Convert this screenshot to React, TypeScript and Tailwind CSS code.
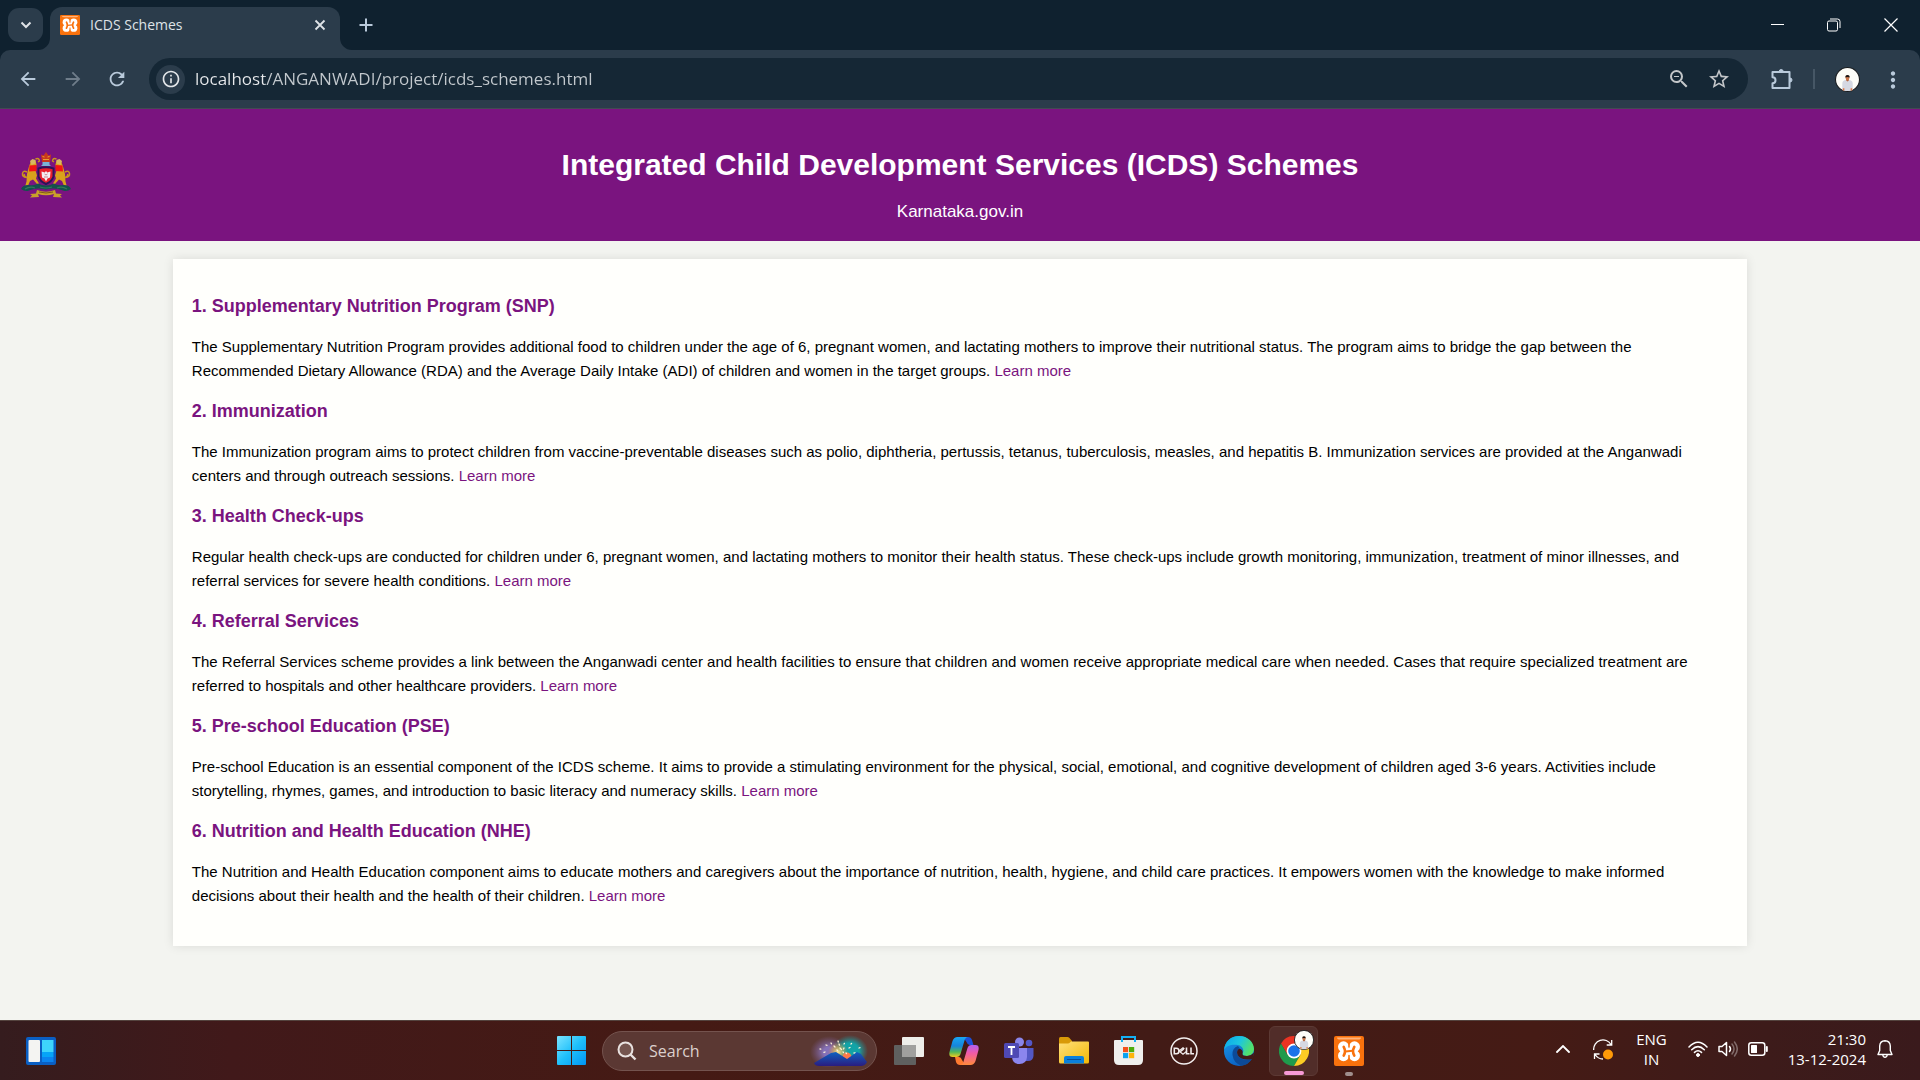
import type { ReactNode } from "react";
import {
  MdArrowBack,
  MdArrowForward,
  MdRefresh,
  MdInfoOutline,
  MdOutlineZoomOut,
  MdStarBorder,
  MdMoreVert,
} from "react-icons/md";

const schemes = [
  {
    title: "1. Supplementary Nutrition Program (SNP)",
    text: "The Supplementary Nutrition Program provides additional food to children under the age of 6, pregnant women, and lactating mothers to improve their nutritional status. The program aims to bridge the gap between the Recommended Dietary Allowance (RDA) and the Average Daily Intake (ADI) of children and women in the target groups.",
  },
  {
    title: "2. Immunization",
    text: "The Immunization program aims to protect children from vaccine-preventable diseases such as polio, diphtheria, pertussis, tetanus, tuberculosis, measles, and hepatitis B. Immunization services are provided at the Anganwadi centers and through outreach sessions.",
  },
  {
    title: "3. Health Check-ups",
    text: "Regular health check-ups are conducted for children under 6, pregnant women, and lactating mothers to monitor their health status. These check-ups include growth monitoring, immunization, treatment of minor illnesses, and referral services for severe health conditions.",
  },
  {
    title: "4. Referral Services",
    text: "The Referral Services scheme provides a link between the Anganwadi center and health facilities to ensure that children and women receive appropriate medical care when needed. Cases that require specialized treatment are referred to hospitals and other healthcare providers.",
  },
  {
    title: "5. Pre-school Education (PSE)",
    text: "Pre-school Education is an essential component of the ICDS scheme. It aims to provide a stimulating environment for the physical, social, emotional, and cognitive development of children aged 3-6 years. Activities include storytelling, rhymes, games, and introduction to basic literacy and numeracy skills.",
  },
  {
    title: "6. Nutrition and Health Education (NHE)",
    text: "The Nutrition and Health Education component aims to educate mothers and caregivers about the importance of nutrition, health, hygiene, and child care practices. It empowers women with the knowledge to make informed decisions about their health and the health of their children.",
  },
];

function XamppLogo({ className }: { className: string }) {
  return (
    <svg viewBox="0 0 30 30" className={className} aria-hidden="true">
      <rect width="30" height="30" rx="2" fill="#f9720d" />
      <path d="M3 1.500h24q0 2-3 2H6q-3 0-3-2z" fill="#ffb37c" />
      <g fill="#fff">
        <circle cx="9.500" cy="10.800" r="5.500" />
        <circle cx="20.500" cy="10.800" r="5.500" />
        <circle cx="9.500" cy="19.700" r="5.500" />
        <circle cx="20.500" cy="19.700" r="5.500" />
        <path d="M6.500 11.500h17v7.500h-17z" />
      </g>
      <g fill="none" stroke="#f9720d" strokeLinecap="round" strokeLinejoin="round">
        <path d="M9.700 10.800q1.300 2.500 1.300 4.400t-1.300 4.500M20.300 10.800Q19 13.300 19 15.200t1.300 4.500" strokeWidth="2.600" />
        <path d="M11.500 15.500l7-.8" strokeWidth="2" />
        <path d="M15 4.500v6.500M15 26v-6.500" strokeWidth="1.500" />
        <path d="M3.500 15.200h1.500M25 15.200h1.500" strokeWidth="1.500" />
      </g>
    </svg>
  );
}

function Avatar({ className }: { className: string }) {
  return (
    <svg viewBox="0 0 24 24" className={className} aria-hidden="true">
      <circle cx="12" cy="12" r="11.500" fill="#fdfdf8" stroke="#15181b" />
      <path d="M7 22v-6q0-3 3-3.500l2 .8 2-.8q3 .5 3 3.500v6q-5 2.200-10 0z" fill="#d5d8e2" />
      <path d="M10.700 10h2.600v3l-1.300.8-1.300-.8z" fill="#b5653f" />
      <ellipse cx="12" cy="10.200" rx="1.900" ry="2.300" fill="#c9754b" />
      <path d="M10 10q-.4-2.400 2-2.400t2 2.400q-2-1-4 0z" fill="#1b1512" />
      <path d="M7.500 20.500h1.500v2H7.500zM15 20.500h1.500v2H15z" fill="#e07a48" />
    </svg>
  );
}

function TitleBar() {
  return (
    <div className="flex h-[50px] bg-[#0f212f] text-[#dfe3e7]">
      <div className="flex w-[50px] items-center pl-2">
        <button aria-label="Search tabs" className="grid h-[34px] w-[35px] place-items-center rounded-[11px] bg-[#2b3c4b]">
          <svg viewBox="0 0 12 12" className="size-3" fill="none" stroke="currentColor" strokeWidth="2" aria-hidden="true">
            <path d="M1.500 3.500L6 8l4.500-4.500" />
          </svg>
        </button>
      </div>
      <div className="relative mt-[7px] flex h-[43px] w-[290px] items-center rounded-t-[12px] bg-[#2b3c4b] pr-3 pb-[7px] pl-[10px]">
        <svg viewBox="0 0 12 12" className="absolute bottom-0 -left-3 size-3 fill-[#2b3c4b]" aria-hidden="true">
          <path d="M12 0v12H0A12 12 0 0 0 12 0z" />
        </svg>
        <svg viewBox="0 0 12 12" className="absolute -right-3 bottom-0 size-3 fill-[#2b3c4b]" aria-hidden="true">
          <path d="M0 0v12h12A12 12 0 0 1 0 0z" />
        </svg>
        <XamppLogo className="size-5" />
        <span className="ml-[10px] flex-1 text-[14px] leading-5">ICDS Schemes</span>
        <button aria-label="Close tab" className="grid size-4 place-items-center">
          <svg viewBox="0 0 12 12" className="size-3" stroke="currentColor" strokeWidth="1.800" aria-hidden="true">
            <path d="M1.500 1.500l9 9M10.500 1.500l-9 9" />
          </svg>
        </button>
      </div>
      <button aria-label="New tab" className="ml-[18px] grid w-4 place-items-center text-[#b9cadb]">
        <svg viewBox="0 0 14 14" className="size-[14px]" stroke="currentColor" strokeWidth="2" aria-hidden="true">
          <path d="M7 .5v13M.5 7h13" />
        </svg>
      </button>
      <div className="ml-auto flex text-white">
        <button aria-label="Minimize" className="grid w-14 place-items-center">
          <svg viewBox="0 0 14 14" className="size-[14px]" stroke="currentColor" aria-hidden="true">
            <path d="M0 6.500h13" />
          </svg>
        </button>
        <button aria-label="Restore" className="grid w-14 place-items-center">
          <svg viewBox="0 0 14 14" className="size-[14px]" fill="none" stroke="currentColor" aria-hidden="true">
            <rect x=".5" y="3" width="10" height="10" rx="1.500" />
            <path d="M3 1h7.500Q13 1 13 3.500V10" />
          </svg>
        </button>
        <button aria-label="Close" className="grid w-[58px] place-items-center">
          <svg viewBox="0 0 14 14" className="size-[14px]" stroke="currentColor" strokeWidth="1.200" aria-hidden="true">
            <path d="M.5.5l13 13M13.500.5l-13 13" />
          </svg>
        </button>
      </div>
    </div>
  );
}

function Toolbar() {
  return (
    <div className="bg-[#0f212f]">
      <div className="flex h-[59px] items-center rounded-t-[10px] border-b border-[#424b52] bg-[#2b3c4b] text-[#b9cadb]">
        <button aria-label="Back" className="ml-4 grid size-6 place-items-center">
          <MdArrowBack className="size-[22px]" />
        </button>
        <button aria-label="Forward" className="ml-[21px] grid size-6 place-items-center text-[#6f7d8a]">
          <MdArrowForward className="size-[22px]" />
        </button>
        <button aria-label="Reload" className="ml-5 grid size-6 place-items-center">
          <MdRefresh className="size-[22px]" />
        </button>
        <div className="ml-5 flex h-[42px] flex-1 items-center rounded-full bg-[#152735] pr-[17px] pl-[7px]">
          <button aria-label="Site information" className="grid size-[29px] place-items-center rounded-full bg-[#2b3c4b] text-[#e3e6e9]">
            <MdInfoOutline className="size-5" />
          </button>
          <input
            aria-label="Address"
            defaultValue="localhost/ANGANWADI/project/icds_schemes.html"
            className="ml-[10px] flex-1 bg-[linear-gradient(90deg,#e8eaed_69px,#c3c9ce_69px)] bg-clip-text text-[17px] leading-6 text-transparent outline-none"
          />
          <button aria-label="Zoom" className="mr-4 grid size-6 place-items-center text-[#c3c6c9]">
            <MdOutlineZoomOut className="size-6" />
          </button>
          <button aria-label="Bookmark this page" className="grid size-6 place-items-center text-[#c3c6c9]">
            <MdStarBorder className="size-6" />
          </button>
        </div>
        <button aria-label="Extensions" className="ml-[23px] grid size-[22px] place-items-center">
          <svg viewBox="0 0 22 22" className="size-[22px]" fill="none" stroke="currentColor" strokeWidth="2" strokeLinejoin="round" aria-hidden="true">
            <path d="M1.500 4h17v16h-17v-4.800a3 3 0 0 0 0-6z" />
            <path d="M8.200 3.500a2 2 0 0 1 4 0zM19 10a2 2 0 0 1 0 4z" fill="currentColor" strokeWidth="1" />
          </svg>
        </button>
        <span className="ml-5 h-5 w-[2px] bg-[#465766]" />
        <button aria-label="Profile" className="ml-5">
          <Avatar className="size-[25px]" />
        </button>
        <button aria-label="Menu" className="mr-4 ml-5 grid size-6 place-items-center">
          <MdMoreVert className="size-[26px]" />
        </button>
      </div>
    </div>
  );
}

function Emblem() {
  const lion = (
    <>
      <path
        d="M10 3.500L14.500 3l1 4-1 6 1.500 5-1 3 3 5-1.500 1-4.500-5-3 1.500-2.500 6H4l1.500-5.500L6 16.500 8 9z"
        fill="#d9a21c"
      />
      <path d="M5.500 20Q1 19.500 1.500 16t4.500-1.500M6 20q-3.500-1.500-2.500-3.500" fill="none" stroke="#c9961c" strokeWidth="1.500" />
      <path d="M8.500 8l7-.5v6l-7.500.5z" fill="#f01414" />
      <path d="M9 3.500l2.500-2 3 1V6l-4 1.500z" fill="#d8b860" />
      <path d="M14.500 1.500q3.500-1.500 4 2l-1.500 1" fill="none" stroke="#c9961c" strokeWidth="1.500" />
    </>
  );
  return (
    <svg viewBox="0 0 50 46" className="h-[46px] w-[50px]" role="img" aria-label="Government of Karnataka emblem">
      <g transform="translate(0 5.500)">{lion}</g>
      <g transform="translate(50 5.500) scale(-1 1)">{lion}</g>
      <path d="M20 2.500l2.500 1L25 0l2.500 3.500 2.500-1L29 10h-8z" fill="#c8391c" />
      <path d="M21.500 4.500l2 .5M26.500 5l2-.5M22 7.500h6" stroke="#e8a030" strokeWidth="1" />
      <path d="M21.500 10h7v2.500l1.500 1.500h-10l1.500-1.500z" fill="#79b4d6" />
      <path d="M17.500 16.500q7.500-2.500 15 0v8q-1.500 5-7.500 7.500-6-2.500-7.500-7.500z" fill="#e8202c" stroke="#2b1458" strokeWidth="2" />
      <path d="M25 19l1.200 1.500 3.300-1-.5 6-2.500 1L25 29.500 23.500 26.500l-2.500-1-.5-6 3.300 1z" fill="#f4eef2" />
      <path d="M23.500 22l1.500 1 1.500-1M23 25h4" stroke="#c06878" strokeWidth=".8" fill="none" />
      <path d="M0 37q2-4.500 8-4 5 1 9-1.500 8 4 16 0 4 2.500 9 1.500 6-.500 8 4-4 3-8 1.500-8-3.500-17-1-9-2.500-17 1-4 1.500-8-1.500z" fill="#14504e" />
      <path d="M4 37q5-3 10-1M36 36q5-2 10 1M19 35q6 2 12 0" stroke="#2f7a58" strokeWidth="1.200" fill="none" />
      <path d="M16 38q9 3.500 18 0l1 3.500 6 .5-2 1.500 2 2-9-.5 1-3q-8 2.500-16 0l1 3-9 .5 2-2-2-1.500 6-.5z" fill="#c9a02a" />
      <path d="M18 40q7 2 14 0" stroke="#6b4a12" strokeWidth=".8" fill="none" />
    </svg>
  );
}

function Page() {
  return (
    <div className="flex flex-1 flex-col bg-[#f3f4f0] font-['Liberation_Sans',Arial,sans-serif]">
      <header className="grid grid-cols-[1fr_auto_1fr] items-center bg-[#7a147f] px-[21px] text-white">
        <Emblem />
        <div className="pt-9 pb-[15px] text-center">
          <h1 className="text-[30px] leading-10 font-bold">Integrated Child Development Services (ICDS) Schemes</h1>
          <p className="mt-[13px] text-[17px] leading-7">Karnataka.gov.in</p>
        </div>
      </header>
      <main className="mx-auto mt-[18px] w-[82%] bg-[#fffffc] px-[19px] pt-[33px] pb-[38px] shadow-[0_0_10px_rgba(0,0,0,0.1)]">
        <div className="flex flex-col gap-[14px]">
          {schemes.map((s) => (
            <section key={s.title}>
              <h2 className="mb-[14px] text-[18px] leading-[29px] font-bold text-[#7a147f]">{s.title}</h2>
              <p className="text-[15px] leading-6 text-black">
                {s.text}{" "}
                <a href="#" className="text-[#7a147f]">
                  Learn more
                </a>
              </p>
            </section>
          ))}
        </div>
      </main>
    </div>
  );
}

function AppButton({ label, children }: { label: string; children: ReactNode }) {
  return (
    <button aria-label={label} className="grid h-[50px] w-[55px] place-items-center">
      {children}
    </button>
  );
}

function SearchArt() {
  return (
    <svg viewBox="0 0 58 32" className="h-8 w-[58px]" aria-hidden="true">
      <defs>
        <radialGradient id="glowL">
          <stop offset=".3" stopColor="#8672b8" />
          <stop offset="1" stopColor="#7a5a90" stopOpacity="0" />
        </radialGradient>
        <radialGradient id="glowR">
          <stop offset=".5" stopColor="#12a3a6" />
          <stop offset="1" stopColor="#2a8c90" stopOpacity="0" />
        </radialGradient>
        <radialGradient id="glowM">
          <stop offset="0" stopColor="#ffe9a0" />
          <stop offset=".5" stopColor="#e8b04c" stopOpacity=".6" />
          <stop offset="1" stopColor="#e88a3a" stopOpacity="0" />
        </radialGradient>
        <linearGradient id="hill" x2="0" y2="1">
          <stop stopColor="#0f62c0" />
          <stop offset="1" stopColor="#2a1c80" />
        </linearGradient>
      </defs>
      <ellipse cx="19" cy="17" rx="19" ry="16" fill="url(#glowL)" />
      <ellipse cx="40" cy="16" rx="18" ry="16" fill="url(#glowR)" />
      <ellipse cx="28" cy="17" rx="10" ry="10" fill="url(#glowM)" />
      <circle cx="37" cy="22" r="4.500" fill="#ff7a48" />
      <g stroke="#fff3d8" strokeWidth="1.300" strokeLinecap="round">
        <path d="M16 10l1 .3M21 8l.5.800M28 6l.3 1M34 9l.4-.6M41 9l.6-.6M49 13l1-.3M10 14l.8.200M15 17l-1 .4M24 11l1 1M29 9l.5 1.200M30 13l1.500 1.500M34 13l-.5 1M39 13l1-.5M44 18l1.500.1M36 18l.5.500M33 17l.5.500M27 15l.5.500" />
      </g>
      <path d="M4 28l17-10 5-1 11 7 10-7 4 2 6 8q-2 4-6 4H9q-4 0-5-3z" fill="url(#hill)" />
    </svg>
  );
}

function Taskbar() {
  return (
    <footer className="grid h-[60px] grid-cols-[1fr_auto_1fr] items-center border-t border-[#54433e] bg-[linear-gradient(90deg,#351c1e_0%,#41191a_12%,#451a14_35%,#421b16_60%,#451b15_80%,#3d1b1a_92%,#3a1a1c_100%)] text-white">
      <div className="pl-[26px]">
        <button aria-label="Widgets" className="block">
          <svg viewBox="0 0 30 28" className="h-7 w-[30px]" aria-hidden="true">
            <rect width="30" height="28" rx="2" fill="#0a5fc4" />
            <rect x="2.500" y="3" width="11.500" height="22" rx="1" fill="#f4f4f2" />
            <rect x="16" y="3" width="11.500" height="12" fill="#3ed4fb" />
            <rect x="16" y="15" width="11.500" height="5" fill="#06a4f8" />
            <rect x="16" y="20" width="11.500" height="5" fill="#0a84f0" />
          </svg>
        </button>
      </div>

      <nav aria-label="Pinned apps" className="flex items-center">
        <AppButton label="Start">
          <svg viewBox="0 0 29 29" className="size-[29px]" aria-hidden="true">
            <defs>
              <linearGradient id="win" x2="1" y2="1">
                <stop stopColor="#7be4ff" />
                <stop offset=".5" stopColor="#1fc0fb" />
                <stop offset="1" stopColor="#0094f4" />
              </linearGradient>
            </defs>
            <path d="M1 0h13v14H0V1q0-1 1-1zM15 0h13q1 0 1 1v13H15zM0 15h14v14H1q-1 0-1-1zM15 15h14v13q0 1-1 1H15z" fill="url(#win)" />
          </svg>
        </AppButton>
        <label className="mr-1 ml-[3px] flex h-10 w-[275px] items-center rounded-full border border-[#74534e] bg-[#5b3833] pr-2 pl-[14px]">
          <svg viewBox="0 0 20 20" className="size-5 text-[#e9e2e0]" stroke="currentColor" strokeWidth="2" fill="#75554f" aria-hidden="true">
            <circle cx="8.500" cy="8.500" r="7" />
            <path d="M13.500 13.500l5 5" strokeWidth="2.400" />
          </svg>
          <input
            aria-label="Search"
            placeholder="Search"
            className="ml-3 w-0 flex-1 bg-transparent text-[16px] leading-6 outline-none placeholder:text-[#dcd0cd]"
          />
          <SearchArt />
        </label>
        <AppButton label="Task view">
          <svg viewBox="0 0 30 28" className="h-7 w-[30px]" aria-hidden="true">
            <rect x="8" width="22" height="20" rx="1" fill="#eeeeea" />
            <rect y="8" width="22" height="20" rx="1" fill="#5f605f" />
            <path d="M8 8h14v12H8z" fill="#a0a09e" />
          </svg>
        </AppButton>
        <AppButton label="Copilot">
          <svg viewBox="0 0 30 28" className="h-7 w-[30px]" aria-hidden="true">
            <defs>
              <linearGradient id="cpA" x2="0" y2="1">
                <stop stopColor="#18a6f4" />
                <stop offset=".45" stopColor="#1684dc" />
                <stop offset=".75" stopColor="#52b858" />
                <stop offset="1" stopColor="#f0cc20" />
              </linearGradient>
              <linearGradient id="cpB" x2="0" y2="1">
                <stop stopColor="#b060f0" />
                <stop offset=".4" stopColor="#f05aa8" />
                <stop offset="1" stopColor="#ff8a3c" />
              </linearGradient>
            </defs>
            <path d="M14 0h5q3 0 4 3l1.500 5h-4q-2 0-3-3z" fill="#1b50d8" />
            <path d="M16 28h-5q-3 0-4-3l-1-5h4q2 0 3 3z" fill="#ff7a30" />
            <path d="M8.500 0H19q-2.500 0-3.500 3.500L11.500 17q-1 3-4 3H3.500Q-.5 20 .5 15L3.500 4Q5 0 8.500 0z" fill="url(#cpA)" />
            <path d="M21.500 28H11q2.500 0 3.500-3.500L18.500 11q1-3 4-3h4q4 0 3 5l-3 11q-1.500 4-5 4z" fill="url(#cpB)" />
          </svg>
        </AppButton>
        <AppButton label="Microsoft Teams">
          <svg viewBox="0 0 30 28" className="h-7 w-[30px]" aria-hidden="true">
            <circle cx="25" cy="6" r="3.300" fill="#5558c8" />
            <circle cx="15.500" cy="5" r="4.500" fill="#8a85ea" />
            <path d="M20 11h9.500v8q-.5 5-5.500 5h-4z" fill="#5358c4" />
            <path d="M8 11h15v9q-.5 7-7.500 7T8 20z" fill="#8b86ee" />
            <rect y="6" width="15" height="15" rx="1.500" fill="#4f49b4" />
            <path d="M4 10h7M7.500 10v8" stroke="#fff" strokeWidth="1.800" />
          </svg>
        </AppButton>
        <AppButton label="File Explorer">
          <svg viewBox="0 0 30 27" className="h-[27px] w-[30px]" aria-hidden="true">
            <defs>
              <linearGradient id="fold" x2="1" y2="1">
                <stop stopColor="#ffe07a" />
                <stop offset="1" stopColor="#f2b806" />
              </linearGradient>
            </defs>
            <path d="M0 1.500Q0 0 1.500 0h7q1 0 2 1l2.500 3v5H0z" fill="#d89a08" />
            <path d="M0 6.500h9q1 0 2-1l1-1h17q1 0 1 1V25q0 1.500-1.500 1.500h-27Q0 26.500 0 25z" fill="url(#fold)" />
            <path d="M5 26.500V21q0-2 2-2h16q2 0 2 2v5.500z" fill="#0a80dc" />
            <path d="M8.500 22.500h13" stroke="#0a4f98" strokeWidth="1.200" strokeLinecap="round" />
          </svg>
        </AppButton>
        <AppButton label="Microsoft Store">
          <svg viewBox="0 0 29 29" className="size-[29px]" aria-hidden="true">
            <path d="M8 6V1h13v5" fill="none" stroke="#14b0f4" strokeWidth="2" />
            <path d="M0 5q0-1 1-1h27q1 0 1 1v19q0 5-5 5H5q-5 0-5-5z" fill="#efefed" />
            <path d="M8 6V1.500M21 6V1.500" stroke="#14b0f4" strokeWidth="2" />
            <path d="M9 11h5.200v5.200H9z" fill="#f4511c" />
            <path d="M15 11h5.200v5.200H15z" fill="#4cac0c" />
            <path d="M9 17h5.200v5.200H9z" fill="#0aa2f0" />
            <path d="M15 17h5.200v5.200H15z" fill="#fcb40a" />
          </svg>
        </AppButton>
        <AppButton label="Dell">
          <svg viewBox="0 0 28 28" className="size-7" aria-hidden="true">
            <circle cx="14" cy="14" r="13" fill="none" stroke="#f2eeee" strokeWidth="1.500" />
            <g fill="none" stroke="#f2eeee" strokeWidth="1.600">
              <path d="M4.300 11.200h2q2.700 0 2.700 2.800t-2.700 2.800h-2z" />
              <path d="M9 14l4-3.200 1 .8-3 2.400M10 15l4-3M9 14l4 3.200 4-3.200" strokeWidth="1.100" />
              <path d="M16.500 10.500v6.300h3M21 10.500v6.300h3" />
            </g>
          </svg>
        </AppButton>
        <AppButton label="Microsoft Edge">
          <svg viewBox="0 0 30 30" className="size-[30px]" aria-hidden="true">
            <defs>
              <linearGradient id="edgeTop" x2="1" y2=".4">
                <stop stopColor="#0aa4ec" />
                <stop offset=".55" stopColor="#1cc6e0" />
                <stop offset="1" stopColor="#52e06c" />
              </linearGradient>
              <linearGradient id="edgeL" x2=".6" y2="1">
                <stop stopColor="#1a9cec" />
                <stop offset="1" stopColor="#0a5cc0" />
              </linearGradient>
            </defs>
            <circle cx="15" cy="15" r="15" fill="url(#edgeL)" />
            <path d="M0 14C1 5 7 0 15 0c9 0 15 6.500 15 13 0 4.500-3.500 7-7 7-3.500 0-5-1.300-4.500-2.500 2-2.500.5-7.500-4.500-8.500C8 8 2 9.500 0 14z" fill="url(#edgeTop)" />
            <path d="M14 10q-6 2-5.500 9 1 8 9 10.700 7-1 10.500-7-5 2.500-10 .3-5-2.500-5-7 .3-3 2.500-4z" fill="#0c4a98" />
            <path d="M18.500 17.500q-.5 2.500 4.500 2.500 4 0 7-3.200-.2 3.500-1.500 5.900-6 1.800-11 -.2-4.500-2.500-4.500-6.500.2-2.700 2.500-3.500 4 1.500 3 5z" fill="#421b16" />
          </svg>
        </AppButton>
        <button aria-label="Google Chrome" className="relative mx-[3px] grid h-[50px] w-[49px] place-items-center rounded-[6px] border border-[#5c3934] bg-[#512d29]">
          <svg viewBox="0 0 30 30" className="size-[30px]" aria-hidden="true">
            <path d="M2 7.500A15 15 0 0 1 28 7.500H15L8.500 18.700z" fill="#ea3323" />
            <path d="M2 7.500A15 15 0 0 0 15 30L21.500 18.700 8.500 18.700z" fill="#1f9a4c" />
            <path d="M28 7.500A15 15 0 0 1 15 30L21.500 18.700 15 7.500z" fill="#fccc24" />
            <circle cx="15" cy="15" r="7.400" fill="#fff" />
            <circle cx="15" cy="15" r="5.800" fill="#1a73e8" />
          </svg>
          <span className="absolute top-[3px] right-[3px]">
            <Avatar className="size-5" />
          </span>
          <span className="absolute bottom-0 h-1 w-5 rounded-full bg-[#f79ad6]" />
        </button>
        <button aria-label="XAMPP" className="relative grid h-[50px] w-[55px] place-items-center">
          <XamppLogo className="size-[30px]" />
          <span className="absolute bottom-0 h-1 w-2 rounded-full bg-[#a08f8d]" />
        </button>
      </nav>

      <div className="flex items-center justify-end pr-[27px] pb-[3px] text-[15px] leading-5">
        <button aria-label="Show hidden icons">
          <svg viewBox="0 0 14 8" className="h-2 w-[14px]" fill="none" stroke="currentColor" strokeWidth="1.800" strokeLinecap="round" aria-hidden="true">
            <path d="M1 7l6-6 6 6" />
          </svg>
        </button>
        <button aria-label="Updates" className="ml-[23px]">
          <svg viewBox="0 0 20 21" className="h-[21px] w-5" fill="none" stroke="currentColor" strokeWidth="1.300" aria-hidden="true">
            <path d="M.7 11A9.300 9.300 0 0 1 18 5.500M18.700 1v5h-5M1.500 20v-5h5M2 15.500Q5 20 10 20" />
            <circle cx="15" cy="15.500" r="5" fill="#ff9a08" stroke="none" />
          </svg>
        </button>
        <button aria-label="Input language" className="ml-[23px] text-center">
          ENG
          <br />
          IN
        </button>
        <button aria-label="Network, volume and battery" className="ml-[21px] flex items-center gap-[10px]">
          <svg viewBox="0 0 20 16" className="h-4 w-5" fill="none" stroke="currentColor" strokeWidth="1.500" strokeLinecap="round" aria-hidden="true">
            <path d="M1 6Q10-3.500 19 6M3.700 8.700q6.300-6.200 12.600 0M6.500 11.400q3.500-3.300 7 0" />
            <circle cx="10" cy="14" r="1.500" fill="currentColor" strokeWidth="1" />
          </svg>
          <svg viewBox="0 0 20 16" className="h-4 w-5" fill="none" stroke="currentColor" strokeWidth="1.500" strokeLinejoin="round" strokeLinecap="round" aria-hidden="true">
            <path d="M1 5.500h3L8.500 1.500v13L4 10.500H1zM11.500 5.500q2 2.500 0 5" />
            <path d="M14 3q4 5 0 10M16.500 1q5.500 7 0 14" opacity=".35" />
          </svg>
          <svg viewBox="0 0 20 14" className="h-[14px] w-5" fill="none" stroke="currentColor" strokeWidth="1.500" aria-hidden="true">
            <rect x=".8" y=".8" width="16" height="12.400" rx="2.500" />
            <rect x="3" y="3" width="6" height="8" rx=".5" fill="currentColor" stroke="none" />
            <path d="M18.800 5v4" strokeWidth="2" strokeLinecap="round" />
          </svg>
        </button>
        <button aria-label="Date and time" className="ml-5 text-right">
          21:30
          <br />
          13-12-2024
        </button>
        <button aria-label="Notifications" className="ml-[11px]">
          <svg viewBox="0 0 16 18" className="h-[18px] w-4" fill="none" stroke="currentColor" strokeWidth="1.400" strokeLinejoin="round" aria-hidden="true">
            <path d="M8 .8Q3 1 2.700 6v4.500L1 14.500h14l-1.700-4V6Q13 1 8 .8zM5.800 15q.3 2.200 2.200 2.200t2.200-2.200" />
          </svg>
        </button>
      </div>
    </footer>
  );
}

export default function App() {
  return (
    <div className="flex min-h-screen flex-col font-['Open_Sans','Noto_Sans',sans-serif]">
      <TitleBar />
      <Toolbar />
      <Page />
      <Taskbar />
    </div>
  );
}
